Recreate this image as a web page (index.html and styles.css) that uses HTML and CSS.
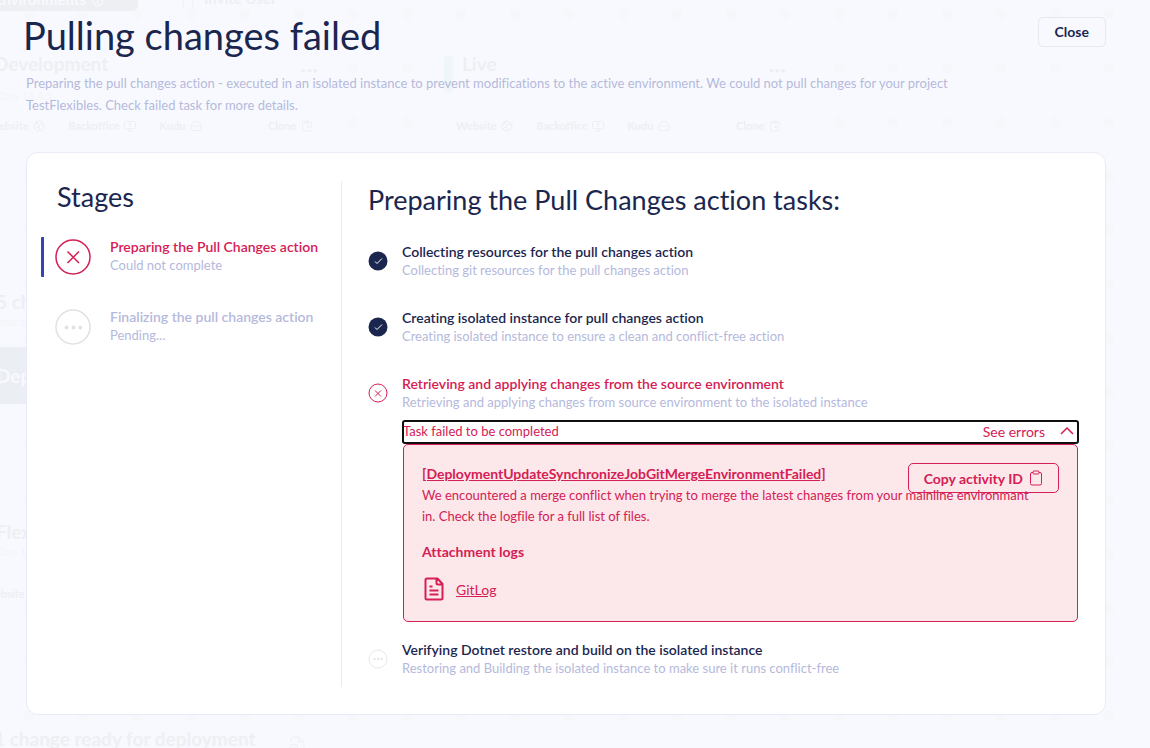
FILE: index.html
```html
<!DOCTYPE html>
<html lang="en">
<head>
<meta charset="utf-8">
<meta name="viewport" content="width=device-width, initial-scale=1">
<title>Pulling changes failed</title>
<link rel="stylesheet" href="styles.css">
</head>
<body>
<svg class="sprite" aria-hidden="true">
  <symbol id="globe" viewBox="0 0 12 12"><circle cx="6" cy="6" r="5"/><path d="M1.5 4 4 3l2 2 2-1 2-2M6 5v3l2 2M4 3V1.500M2 9l2-2 2 1M8 4l2.500 2"/></symbol>
  <symbol id="screen" viewBox="0 0 12 12"><rect x=".5" y="1.500" width="11" height="7" rx="1"/><path d="M6 8.500V11M3.500 11h5M6 7V3.500M4.500 5 6 3.500 7.500 5"/></symbol>
  <symbol id="drive" viewBox="0 0 12 12"><rect x=".5" y="6" width="11" height="4.500" rx="1.500"/><path d="M.8 6.500 2.500 2.500Q3 1.500 4 1.500h4Q9 1.500 9.500 2.500l1.700 4M8 8.300h1.500"/></symbol>
  <symbol id="clone" viewBox="0 0 12 12"><path d="M10.500 5V3Q10.500 2 9.500 2h-7Q1.500 2 1.500 3v7Q1.500 11 2.500 11h7Q10.500 11 10.500 10V9M4 1h4v2H4zM11 7H6M7.500 5.500 6 7l1.500 1.500"/></symbol>
</svg>

<div class="canvas" aria-hidden="true">
  <div class="node env env-dev">
    <div class="env-head"><b>Development</b><i>•••</i></div>
    <div class="env-ver">Cms 15.4.1</div>
    <div class="env-links"><span>Website <svg class="mini"><use href="#globe"/></svg></span><span>Backoffice <svg class="mini"><use href="#screen"/></svg></span><span>Kudu <svg class="mini"><use href="#drive"/></svg></span><span class="push">Clone <svg class="mini"><use href="#clone"/></svg></span></div>
  </div>
  <div class="node env env-live">
    <div class="env-head"><b>Live</b><i>•••</i></div>
    <div class="env-ver"></div>
    <div class="env-links"><span>Website <svg class="mini"><use href="#globe"/></svg></span><span>Backoffice <svg class="mini"><use href="#screen"/></svg></span><span>Kudu <svg class="mini"><use href="#drive"/></svg></span><span class="push">Clone <svg class="mini"><use href="#clone"/></svg></span></div>
  </div>
  <div class="node chip-env">Environments <svg class="mini"><use href="#globe"/></svg></div>
  <div class="node invite"><svg class="people" viewBox="0 0 14 14"><path d="M1 14V9q0-3 3-3M8 6q3 0 3 3v5"/></svg>Invite User</div>
  <div class="node live-mark"></div>
  <div class="node changes"><b>5 changes</b><small>Your team</small></div>
  <div class="node deploy">Deploy</div>
  <div class="node flex-env"><b>Flexible</b><small>Cms 15.4.1</small><span>Website</span></div>
  <div class="node ready"><b>1 change ready for deployment</b>
    <svg class="doc" viewBox="0 0 18 18"><path d="M3 6V3q0-2 2-2h6l5 5v12M11 1v5h5"/><circle cx="6" cy="12" r="4"/><path d="M6 9.500V12h2"/></svg>
  </div>
</div>

<main class="dialog">
  <header class="head">
    <div>
      <h1>Pulling changes failed</h1>
      <p>Preparing the pull changes action - executed in an isolated instance to prevent modifications to the active environment. We could not pull changes for your project TestFlexibles. Check failed task for more details.</p>
    </div>
    <button class="close" type="button">Close</button>
  </header>

  <div class="card">
    <section class="stages">
      <h2>Stages</h2>
      <ol>
        <li class="stage failed">
          <svg class="stage-icon" viewBox="0 0 36 36"><circle cx="18" cy="18" r="17"/><path d="M12.500 12.500 24 24M24 12.500 12.500 24"/></svg>
          <div><strong>Preparing the Pull Changes action</strong><span>Could not complete</span></div>
        </li>
        <li class="stage pending">
          <svg class="stage-icon" viewBox="0 0 36 36"><circle cx="18" cy="18" r="17"/><g class="dots"><circle cx="11.500" cy="18.500" r="1.900"/><circle cx="18.500" cy="18.500" r="1.900"/><circle cx="25.300" cy="18.500" r="1.900"/></g></svg>
          <div><strong>Finalizing the pull changes action</strong><span>Pending...</span></div>
        </li>
      </ol>
    </section>

    <section class="tasks">
      <h2>Preparing the Pull Changes action tasks:</h2>
      <ol>
        <li class="task">
          <svg class="task-icon done" viewBox="0 0 20 20"><circle cx="10" cy="10" r="9.500"/><path d="m7 10.500 2 2L14 7.500"/></svg>
          <div><strong>Collecting resources for the pull changes action</strong><span>Collecting git resources for the pull changes action</span></div>
        </li>
        <li class="task">
          <svg class="task-icon done" viewBox="0 0 20 20"><circle cx="10" cy="10" r="9.500"/><path d="m7 10.500 2 2L14 7.500"/></svg>
          <div><strong>Creating isolated instance for pull changes action</strong><span>Creating isolated instance to ensure a clean and conflict-free action</span></div>
        </li>
        <li class="task failed">
          <svg class="task-icon" viewBox="0 0 20 20"><circle cx="10" cy="10" r="9"/><path d="m7 7.500 6 6M13 7.500l-6 6"/></svg>
          <div><strong>Retrieving and applying changes from the source environment</strong><span>Retrieving and applying changes from source environment to the isolated instance</span></div>
          <div class="details">
            <button class="toggle" type="button" aria-expanded="true" aria-controls="errors">
              <span>Task failed to be completed</span>
              <span class="see">See errors <svg class="chevron" viewBox="0 0 14 8"><path d="m1 7 6-6 6 6"/></svg></span>
            </button>
            <div class="errors" id="errors">
              <button class="copy" type="button">Copy activity ID
                <svg class="clip" viewBox="0 0 12 16"><path d="M3 2.500H2Q.5 2.500.5 4v9.500Q.5 15 2 15h8q1.500 0 1.500-1.500V4Q11.500 2.500 10 2.500H9"/><rect x="3" y="1" width="6" height="3" rx="1"/></svg>
              </button>
              <p><a class="code" href="#errors">[DeploymentUpdateSynchronizeJobGitMergeEnvironmentFailed]</a></p>
              <p class="message">We encountered a merge conflict when trying to merge the latest changes from your mainline environmant in. Check the logfile for a full list of files.</p>
              <h3>Attachment logs</h3>
              <p class="log">
                <svg class="file" viewBox="0 0 20 24"><path d="M3 1.500h10.500L18.500 7v14q0 1.500-1.500 1.500H3q-1.500 0-1.500-1.500V3Q1.500 1.500 3 1.500zM12.500 1.500v4.500q0 1.500 1.500 1.500h4.500M5.500 9.500h3M5.500 13.500h9M5.500 17.500h9"/></svg>
                <a href="#gitlog">GitLog</a>
              </p>
            </div>
          </div>
        </li>
        <li class="task">
          <svg class="task-icon waiting" viewBox="0 0 20 20"><circle cx="10" cy="10" r="9"/><g class="dots"><circle cx="6.500" cy="10" r="1.300"/><circle cx="10" cy="10" r="1.300"/><circle cx="13.500" cy="10" r="1.300"/></g></svg>
          <div><strong>Verifying Dotnet restore and build on the isolated instance</strong><span>Restoring and Building the isolated instance to make sure it runs conflict-free</span></div>
        </li>
      </ol>
    </section>
  </div>
</main>
</body>
</html>
```
FILE: styles.css
```css
:root {
  --navy: #1b264f;
  --red: #d42054;
  --muted: #b5b9dc;
  --line: #e9ebf8;
  --page: #f8f9fe;
  --ghost: #edeff3;
}
* { box-sizing: border-box; }
body {
  position: relative;
  margin: 0;
  min-height: 100vh;
  overflow: hidden;
  background: var(--page);
  color: var(--navy);
  font: 13px/19px Lato, "Liberation Sans", sans-serif;
  font-variant-ligatures: none;
}
h1, h2, h3, p, ol { margin: 0; padding: 0; font-weight: 400; }
strong { font-size: 14px; font-weight: 600; }
ol { list-style: none; }
svg { fill: none; stroke: currentColor; flex: none; }
button { font: inherit; cursor: pointer; }
a { color: inherit; }
.sprite { position: absolute; width: 0; height: 0; }

/* Faded project canvas behind the dialog */
.canvas {
  position: absolute;
  inset: 0;
  overflow: hidden;
  color: var(--ghost);
  background: radial-gradient(circle at 27px 27px, #f5f7fb 5px, transparent 6px) 2px -13px / 54px 54px;
}
.node { position: absolute; white-space: nowrap; }
.node b { font-size: 19px; line-height: 24px; }
.node small { font-size: 11px; line-height: 16px; color: #f3f4f9; }
.mini { width: 12px; height: 12px; vertical-align: -2px; margin-left: 2px; }
.chip-env { left: -24px; top: -14px; width: 162px; height: 25px; padding: 4px 18px; border-radius: 6px; background: var(--ghost); color: var(--page); font-size: 15px; font-weight: 700; }
.invite { left: 182px; top: -11px; font-size: 15px; font-weight: 700; }
.people { width: 14px; height: 14px; margin-right: 8px; vertical-align: -3px; }
.env { top: 28px; width: 362px; height: 124px; padding: 24px 24px 0 14px; background: var(--page); border-radius: 12px; }
.env-dev { left: -20px; }
.env-live { left: 418px; width: 392px; padding-left: 44px; }
.env-head { display: flex; justify-content: space-between; }
.env-head i { font: 10px/36px Lato, sans-serif; }
.env-ver { height: 16px; margin-left: 4px; font-size: 11px; line-height: 16px; color: #f3f4f9; }
.env-links { display: flex; gap: 23px; margin: 10px 0 0 -6px; font-size: 11px; font-weight: 700; line-height: 24px; }
.env-links .push { margin-left: 43px; }
.live-mark { left: 444px; top: 55px; width: 9px; height: 37px; border-radius: 5px; background: #eef6f7; }
.changes { left: -4px; top: 290px; display: grid; }
.deploy { left: -24px; top: 347px; width: 140px; padding: 0 20px; background: #ebeef3; color: var(--page); font-size: 19px; font-weight: 700; line-height: 57px; }
.flex-env { left: -4px; top: 520px; display: grid; }
.flex-env span { margin: 22px 0 0 -12px; font-size: 11px; font-weight: 700; line-height: 24px; }
.ready { left: -6px; top: 727px; display: flex; gap: 32px; }
.doc { width: 18px; height: 18px; margin-top: 9px; }

.dialog { position: relative; padding: 12px 44px 34px 26px; }
.head { display: flex; justify-content: space-between; align-items: flex-start; min-height: 140px; }
.head h1 { margin-left: -3px; font-size: 38px; line-height: 46px; }
.head p { max-width: 956px; margin-top: 14px; color: var(--muted); line-height: 22px; }
.close {
  margin-top: 5px;
  padding: 0 16px;
  border: 1px solid #e6e8f0;
  border-radius: 5px;
  background: transparent;
  color: var(--navy);
  font-size: 14px;
  font-weight: 700;
  line-height: 28px;
}

.card {
  display: flex;
  padding: 28px 27px 27px 14px;
  border: 1px solid var(--line);
  border-radius: 12px;
  background: #fff;
}
.stages { flex: none; width: 301px; border-right: 1px solid var(--line); }
h2 { font-size: 27px; line-height: 32px; }
.stages h2 { margin-left: 16px; }
.stages ol { display: grid; gap: 30px; margin-top: 24px; }
.stage { display: flex; align-items: center; height: 40px; border-left: 3px solid transparent; border-radius: 1px; }
.stage div { padding-bottom: 2px; }
.stage strong, .stage span, .task strong, .task div > span { display: block; }
.stage-icon { width: 36px; height: 36px; margin: 0 19px 0 11px; stroke-width: 1.500; }
.stage span, .task div > span { color: var(--muted); }
.stage.failed { border-color: #3544b1; color: var(--red); }
.stage.pending { color: var(--muted); }
.stage.pending .stage-icon { color: #e2e2e2; }
.dots { fill: currentColor; stroke: none; }

.tasks { flex: 1; min-width: 0; padding-left: 26px; }
.tasks h2 { margin-top: 3px; }
.tasks > ol { display: grid; gap: 28px; margin: 26px 0 9px; }
.task { display: grid; grid-template-columns: 20px minmax(0, 1fr); column-gap: 14px; align-items: center; }
.task-icon { width: 20px; height: 20px; }
.task-icon.done circle { fill: var(--navy); stroke: none; }
.task-icon.done path { stroke: #fff; }
.task-icon.waiting { color: #e8e8e8; }
.task.failed { color: var(--red); }
.details { grid-column: 1 / -1; margin: 9px 0 -10px 35px; }
.details .toggle {
  display: flex;
  justify-content: space-between;
  align-items: center;
  width: 100%;
  height: 22px;
  padding: 0 4px 2px 0;
  border: 0;
  border-radius: 2px;
  outline: 2px solid #101010;
  outline-offset: -1px;
  background: #fff;
  color: var(--red);
}
.see { display: flex; align-items: center; gap: 15px; font-size: 14px; }
.chevron { width: 14px; height: 8px; stroke-width: 1.500; }
.errors {
  position: relative;
  margin-top: 1px;
  padding: 18px 18px 20px;
  border: 1px solid var(--red);
  border-radius: 5px;
  background: #fce8eb;
  line-height: 21px;
}
.message { max-width: 620px; }
.code, .errors h3 { font-size: 14px; font-weight: 700; }
.errors h3 { margin-top: 14px; }
.copy {
  position: absolute;
  top: 18px;
  right: 18px;
  display: flex;
  align-items: center;
  gap: 7px;
  height: 30px;
  padding: 0 16px 0 15px;
  border: 1px solid var(--red);
  border-radius: 5px;
  background: transparent;
  color: var(--red);
  font-size: 14px;
  font-weight: 700;
}
.clip { width: 12px; height: 16px; }
.log { display: flex; align-items: center; gap: 12px; margin: 15px 0 0 2px; font-size: 14px; }
.file { width: 20px; height: 24px; stroke-width: 2; }
```
